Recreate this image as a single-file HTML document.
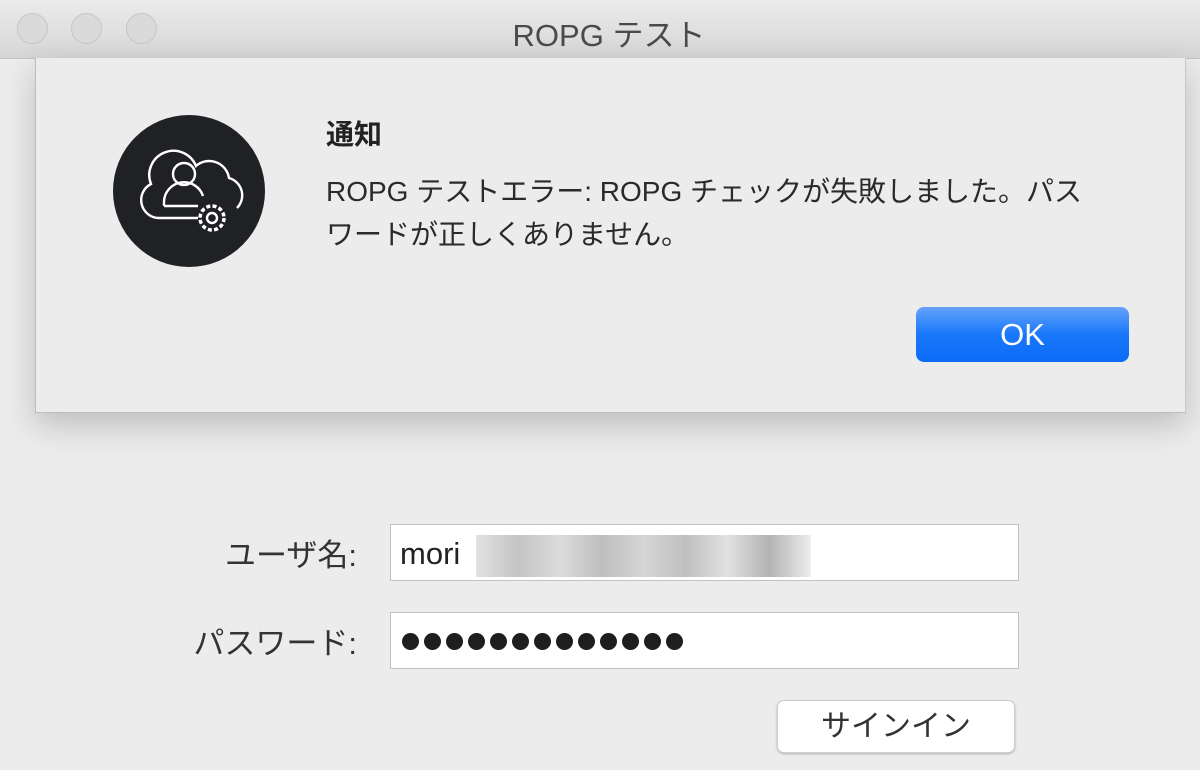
<html><head><style>
body{margin:0;width:1200px;height:770px;background:#ececec;position:relative;overflow:hidden;font-family:"Liberation Sans","Noto Sans CJK JP",sans-serif;}
.tb{position:absolute;left:0;top:0;width:1200px;height:58px;background:linear-gradient(#ebebeb,#d6d6d6);border-bottom:1px solid #c4c4c4;}
.dot{position:absolute;top:13px;width:31px;height:31px;border-radius:50%;background:#dadada;border:1px solid #c6c6c6;box-sizing:border-box;}
.title{position:absolute;top:10px;left:0;width:1218px;text-align:center;font-size:31px;color:#4a4a4a;}
.dlg{position:absolute;left:35px;top:58px;width:1151px;height:355px;background:#ececec;border-left:1px solid #bcbcbc;border-right:1px solid #c8c8c8;border-bottom:1px solid #bdbdbd;box-shadow:0 12px 30px rgba(0,0,0,.2);box-sizing:border-box;}
.h{position:absolute;font-size:28px;font-weight:bold;color:#222;}
.m{position:absolute;font-size:28px;line-height:43px;color:#2a2a2a;white-space:nowrap;}
.ok{position:absolute;width:213px;height:55px;border-radius:8px;background:linear-gradient(#64a3fb,#1877fa 50%,#0d6cf7);color:#fff;font-size:31px;text-align:center;line-height:55px;}
.lbl{position:absolute;font-size:31px;color:#333;text-align:right;width:230px;}
.fld{position:absolute;left:390px;width:629px;height:57px;background:#fff;border:1px solid #c2c2c2;box-sizing:border-box;}
.btn{position:absolute;left:777px;top:700px;width:238px;height:53px;background:#fff;border-radius:7px;border:1px solid #cfcfcf;box-shadow:0 1px 2px rgba(0,0,0,.25);box-sizing:border-box;font-size:30px;text-align:center;line-height:51px;color:#333;}
.bl{position:absolute;top:20px;width:17px;height:17px;border-radius:50%;background:#1e1e1e;}
</style></head><body>
<div class="tb"><div class="dot" style="left:17px"></div><div class="dot" style="left:71px"></div><div class="dot" style="left:126px"></div><div class="title">ROPG テスト</div></div>
<div class="lbl" style="left:127px;top:530px">ユーザ名:</div>
<div class="lbl" style="left:127px;top:618px">パスワード:</div>
<div class="fld" style="top:524px"><span style="position:absolute;left:9px;top:11px;font-size:31px;color:#222">mori</span>
<div style="position:absolute;left:85px;top:10px;width:335px;height:42px;background:linear-gradient(90deg,#d8d8d8,#b0b0b0,#d0d0d0,#a8a8a8,#c8c8c8,#aaaaaa,#d8d8d8,#999,#e8e8e8);opacity:.75"></div></div>
<div class="fld" style="top:612px">
<div class="bl" style="left:11px"></div><div class="bl" style="left:33px"></div><div class="bl" style="left:55px"></div><div class="bl" style="left:77px"></div><div class="bl" style="left:99px"></div><div class="bl" style="left:121px"></div><div class="bl" style="left:143px"></div><div class="bl" style="left:165px"></div><div class="bl" style="left:187px"></div><div class="bl" style="left:209px"></div><div class="bl" style="left:231px"></div><div class="bl" style="left:253px"></div><div class="bl" style="left:275px"></div>
</div>
<div class="btn">サインイン</div>
<div class="dlg">
<svg style="position:absolute;left:76px;top:56px" width="154" height="154" viewBox="0 0 154 154">
<circle cx="77" cy="77" r="76" fill="#202124"/>
<g fill="none" stroke="#fff" stroke-width="2.4">
<path d="M86 104H46a18 18 0 0 1-7-34 24 24 0 0 1 45-18 20 20 0 0 1 33 12 18 18 0 0 1 8 30"/>
<circle cx="72" cy="60" r="11"/>
<path d="M52 92v-4a20 20 0 0 1 39-6"/>
<path d="M52 92h34"/>
<circle cx="100" cy="104" r="5"/>
<circle cx="100" cy="104" r="12" stroke-width="3.5" stroke-dasharray="4 2.3"/>
</g></svg>
<div class="h" style="left:290px;top:55px">通知</div>
<div class="m" style="left:290px;top:112px">ROPG テストエラー: ROPG チェックが失敗しました。パス<br>ワードが正しくありません。</div>
<div class="ok" style="left:880px;top:249px">OK</div>
</div>
</body></html>
